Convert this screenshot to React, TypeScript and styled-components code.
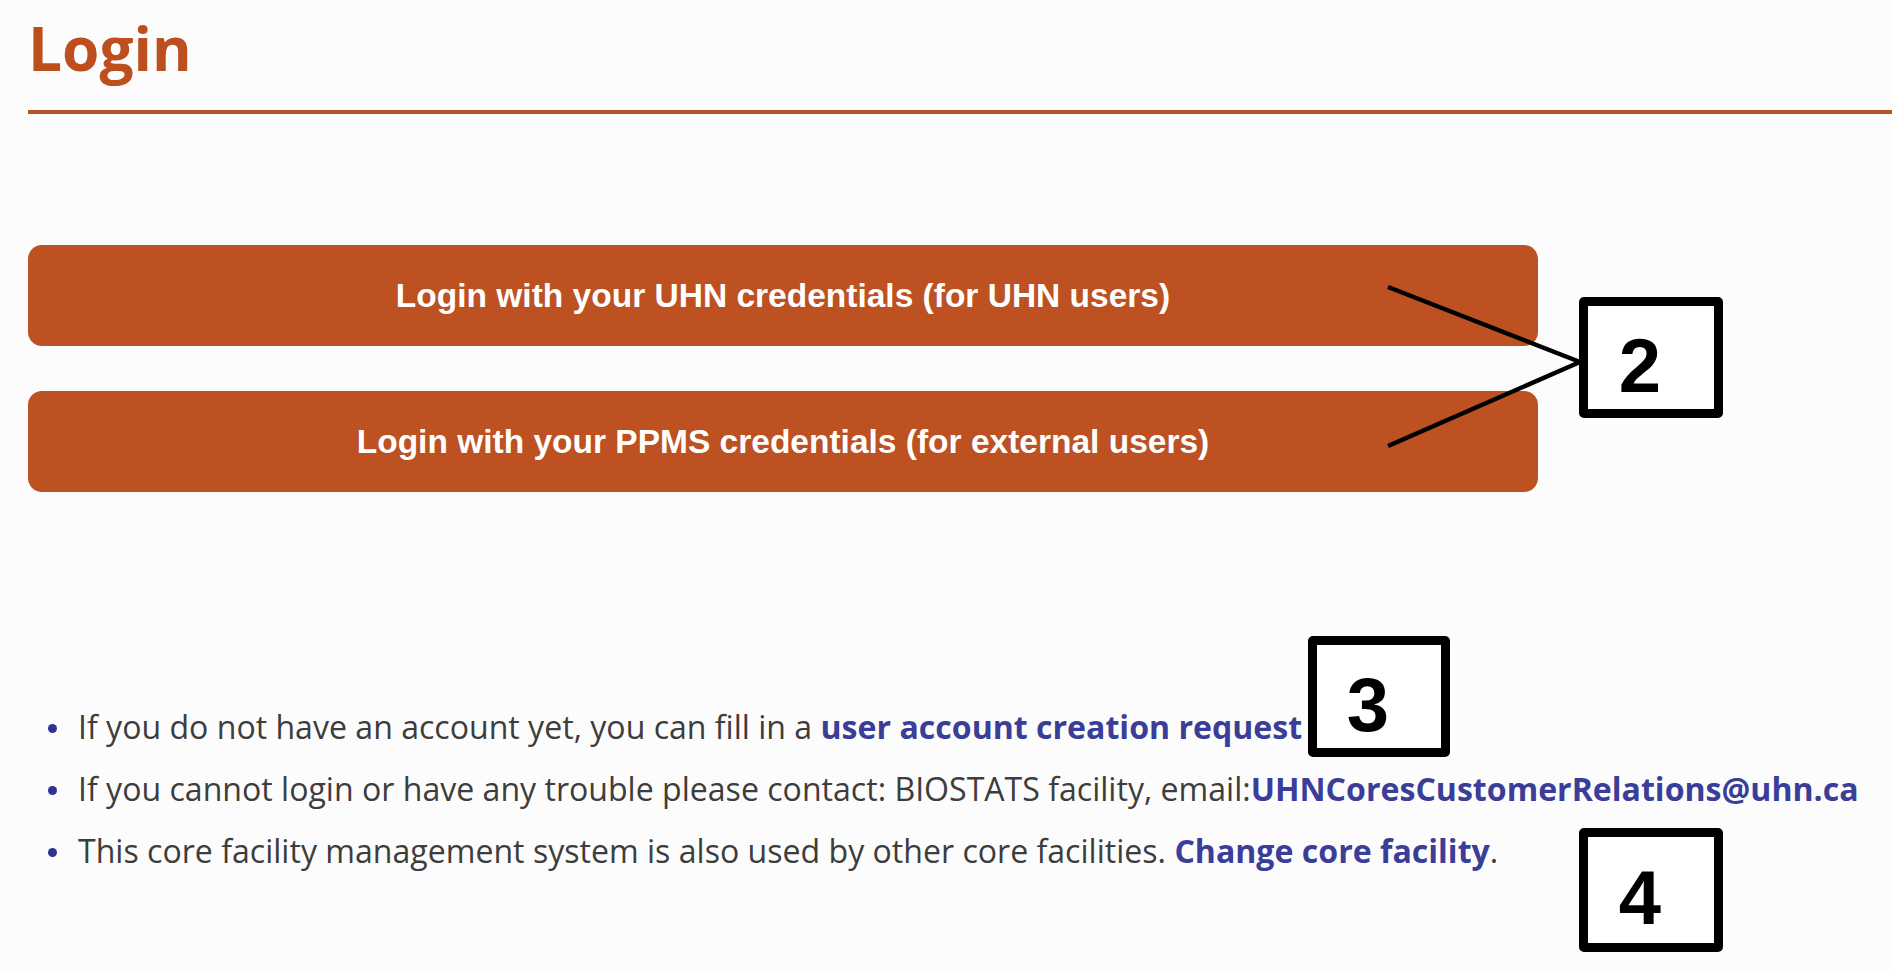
import React from "react";
import styled, { createGlobalStyle } from "styled-components";

const GlobalStyle = createGlobalStyle`
  html, body {
    margin: 0;
    padding: 0;
    background: #fcfcfc;
  }
  body {
    font-family: "Open Sans", "Noto Sans", sans-serif;
  }
`;

const Page = styled.div`
  position: relative;
  box-sizing: border-box;
  width: 1892px;
  min-height: 970px;
  padding-left: 28px;
  overflow: hidden;
`;

const Title = styled.h1`
  margin: 0;
  padding-top: 18px;
  font-family: "Open Sans", sans-serif;
  font-weight: 700;
  font-size: 60.4px;
  line-height: 1;
  color: #bd4f1f;
`;

const Rule = styled.div`
  margin-top: 32px;
  height: 4px;
  background: #bd5122;
`;

const ButtonStack = styled.div`
  margin-top: 131px;
  display: flex;
  flex-direction: column;
  gap: 45px;
`;

const LoginButton = styled.button`
  width: 1510px;
  height: 101px;
  border: none;
  border-radius: 14px;
  background: #bd5122;
  color: #ffffff;
  font-family: "Liberation Sans", Arial, sans-serif;
  font-weight: 700;
  font-size: 33.5px;
  display: flex;
  align-items: center;
  justify-content: center;
  padding: 0;
  cursor: pointer;
`;

const InfoList = styled.ul`
  margin: 204px 0 0 0;
  padding: 0;
  list-style: none;
`;

const InfoItem = styled.li`
  display: flex;
  font-size: 32.1px;
  line-height: 62px;
  color: #3d3d3d;

  &::before {
    content: "";
    flex: none;
    width: 9px;
    height: 9px;
    border-radius: 50%;
    background: #2f3394;
    margin: 28px 21px 0 20px;
  }
`;

const Link = styled.a`
  color: #3a3e98;
  font-weight: 700;
  text-decoration: none;
`;

const Overlay = styled.svg`
  position: absolute;
  left: 0;
  top: 0;
  pointer-events: none;
`;

const Callout = styled.div<{ $x: number; $y: number; $w: number; $h: number }>`
  position: absolute;
  left: ${(p) => p.$x}px;
  top: ${(p) => p.$y}px;
  width: ${(p) => p.$w}px;
  height: ${(p) => p.$h}px;
  box-sizing: border-box;
  border: 9px solid #000;
  border-radius: 5px;
  background: #ffffff;
  display: flex;
  align-items: center;
  justify-content: center;
  padding: 16px 22px 0 0;
  font-family: "Liberation Sans", Arial, sans-serif;
  font-weight: 700;
  font-size: 76px;
  line-height: 1;
  color: #000;
`;

export default function App() {
  return (
    <>
      <GlobalStyle />
      <Page>
        <Title>Login</Title>
        <Rule />
        <ButtonStack>
          <LoginButton>Login with your UHN credentials (for UHN users)</LoginButton>
          <LoginButton>Login with your PPMS credentials (for external users)</LoginButton>
        </ButtonStack>
        <InfoList>
          <InfoItem>
            <span>
              If you do not have an account yet, you can fill in a{" "}
              <Link href="#">user account creation request</Link>
            </span>
          </InfoItem>
          <InfoItem>
            <span>
              If you cannot login or have any trouble please contact: BIOSTATS facility, email:
              <Link href="#">UHNCoresCustomerRelations@uhn.ca</Link>
            </span>
          </InfoItem>
          <InfoItem>
            <span>
              This core facility management system is also used by other core facilities.{" "}
              <Link href="#">Change core facility</Link>.
            </span>
          </InfoItem>
        </InfoList>

        <Overlay width={1892} height={970} viewBox="0 0 1892 970">
          <line x1={1388} y1={287} x2={1580} y2={362} stroke="#000" strokeWidth={4.5} />
          <line x1={1580} y1={362} x2={1388} y2={446} stroke="#000" strokeWidth={4.5} />
        </Overlay>
        <Callout $x={1579} $y={297} $w={144} $h={121}>2</Callout>
        <Callout $x={1308} $y={636} $w={142} $h={121}>3</Callout>
        <Callout $x={1579} $y={828} $w={144} $h={124}>4</Callout>
      </Page>
    </>
  );
}
